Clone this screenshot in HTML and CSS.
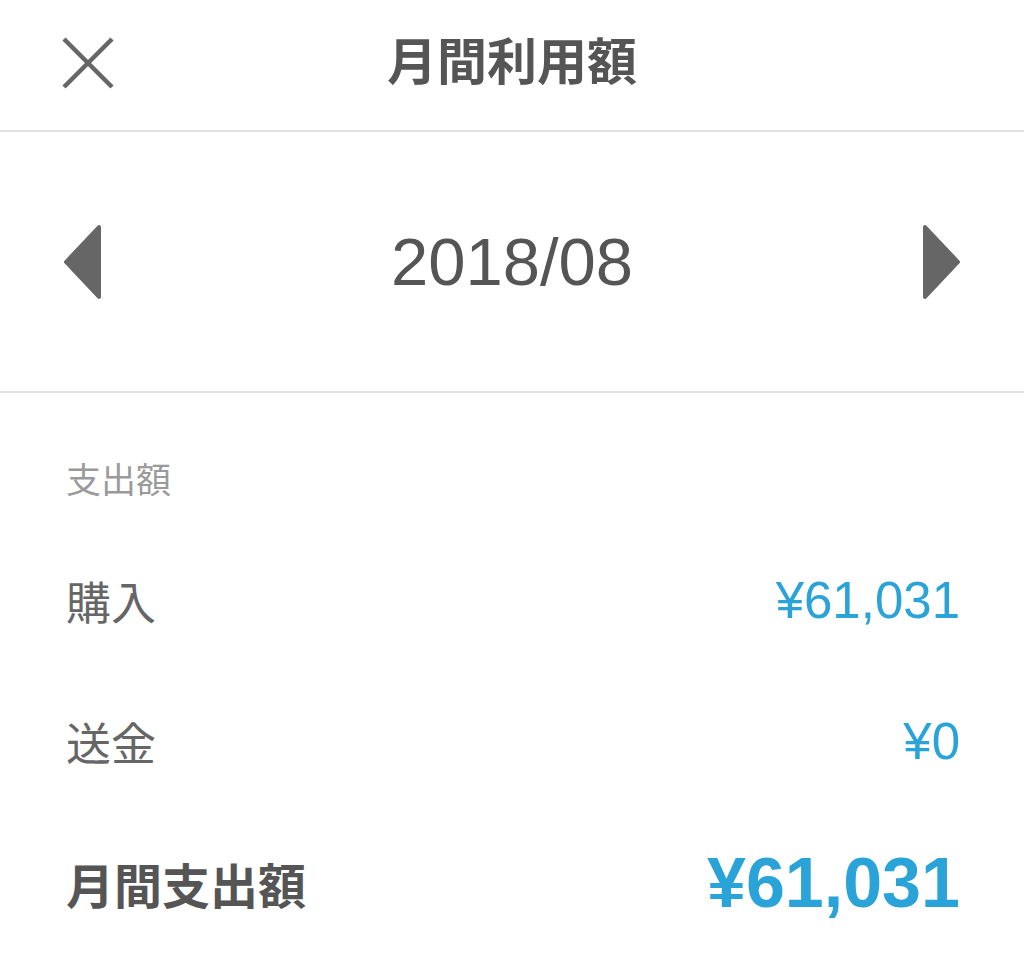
FILE: index.html
```html
<!DOCTYPE html>
<html lang="ja">
<head>
	<meta charset="UTF-8">
	<title>月間利用額</title>
	<link rel="stylesheet" href="styles.css">
</head>
<body>
	<div class="head">
		<a class="close" href="javascript:;">
			<svg width="52" height="52" viewBox="0 0 52 52"><path d="M2 2L50 50M50 2L2 50" stroke="#666" stroke-width="4.5" fill="none"/></svg>
		</a>
		<h1 class="title">月間利用額</h1>
		<span></span>
	</div>
	<div class="month">
		<a class="arrow" href="javascript:;">
			<svg width="40" height="76" viewBox="0 0 40 76"><path d="M36 3L36 73L3 38Z" fill="#666" stroke="#666" stroke-width="4" stroke-linejoin="round"/></svg>
		</a>
		<p class="date">2018/08</p>
		<a class="arrow" href="javascript:;">
			<svg width="40" height="76" viewBox="0 0 40 76"><path d="M4 3L4 73L37 38Z" fill="#666" stroke="#666" stroke-width="4" stroke-linejoin="round"/></svg>
		</a>
	</div>
	<div class="list">
		<p class="label">支出額</p>
		<div class="row">
			<span class="name">購入</span>
			<span class="price">¥61,031</span>
		</div>
		<div class="row">
			<span class="name">送金</span>
			<span class="price">¥0</span>
		</div>
		<div class="row total">
			<span class="name">月間支出額</span>
			<span class="price">¥61,031</span>
		</div>
	</div>
</body>
</html>
```

FILE: styles.css
```css
body,h1,p{margin:0;padding:0;}
body{background:#fff;font-family:"Liberation Sans","Noto Sans CJK JP",sans-serif;color:#555;}
a{text-decoration:none;}
.head{height:130px;border-bottom:2px solid #e2e2e2;display:grid;grid-template-columns:1fr auto 1fr;align-items:center;padding:0 62px 4px;box-sizing:border-box;height:132px;}
.close{display:flex;width:52px;height:52px;}
.title{font-size:50px;font-weight:bold;color:#555;line-height:1;}
.month{height:259px;border-bottom:2px solid #e2e2e2;display:flex;align-items:center;justify-content:space-between;padding:0 63px 0 63px;}
.arrow{display:flex;}
.date{font-size:67px;color:#555;line-height:1;}
.list{padding:38px 64px 0 66px;}
.label{height:99px;line-height:99px;font-size:35px;color:#9a9a9a;}
.row{height:141px;display:flex;align-items:center;justify-content:space-between;}
.name{font-size:45px;color:#666;}
.price{font-size:51px;color:#2aa3d8;}
.total .name{font-size:48px;font-weight:bold;color:#555;}
.total .price{font-size:70px;font-weight:bold;}
```
